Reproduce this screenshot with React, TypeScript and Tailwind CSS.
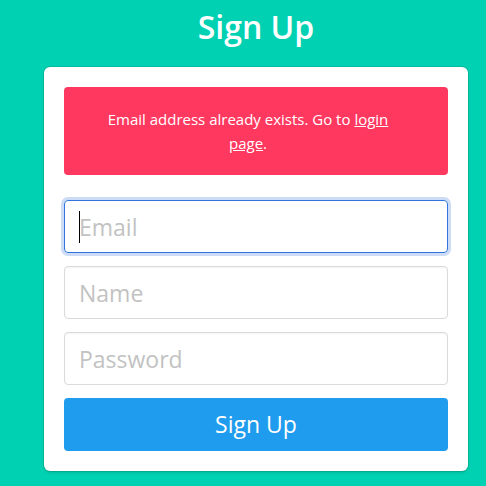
import React from 'react';

const font = { fontFamily: '"Open Sans", "Noto Sans", sans-serif' };

const App: React.FC = () => {
  return (
    <div className="min-h-[486px] w-full bg-[#00d1b2] flex flex-col items-center pt-[7px] pl-[26px]" style={font}>
      <h1 className="text-[32px] leading-[40px] font-semibold text-white">Sign Up</h1>

      <div className="mt-[20px] w-[424px] bg-white rounded-[6px] p-5 shadow-[0_2px_3px_rgba(10,10,10,0.1),0_0_0_1px_rgba(10,10,10,0.1)]">
        {/* Error notification */}
        <div className="bg-[#ff3860] rounded-[4px] pt-5 pb-5 pl-6 pr-10 text-white text-center text-[15px] leading-6">
          Email address already exists. Go to <a className="underline">login</a>
          <br />
          <a className="underline">page</a>.
        </div>

        <form className="mt-[25px] flex flex-col gap-[13px]">
          <div className="relative">
            <input
              type="email"
              placeholder="Email"
              className="w-full h-[53px] px-[14px] text-[23px] rounded-[4px] border border-[#3273dc] shadow-[0_0_0_3px_rgba(50,115,220,0.25)] outline-none placeholder:text-[#c2c2c2] caret-transparent"
            />
            <span className="absolute left-[15px] top-[11px] w-px h-[32px] bg-black" />
          </div>
          <input
            type="text"
            placeholder="Name"
            className="w-full h-[53px] px-[14px] text-[23px] rounded-[4px] border border-[#dbdbdb] shadow-[inset_0_1px_2px_rgba(10,10,10,0.05)] outline-none placeholder:text-[#c2c2c2]"
          />
          <input
            type="password"
            placeholder="Password"
            className="w-full h-[53px] px-[14px] text-[23px] rounded-[4px] border border-[#dbdbdb] shadow-[inset_0_1px_2px_rgba(10,10,10,0.05)] outline-none placeholder:text-[#c2c2c2]"
          />
          <button
            type="button"
            className="w-full h-[53px] rounded-[4px] bg-[#209cee] text-white text-[23px]"
          >
            Sign Up
          </button>
        </form>
      </div>
    </div>
  );
};

export default App;
